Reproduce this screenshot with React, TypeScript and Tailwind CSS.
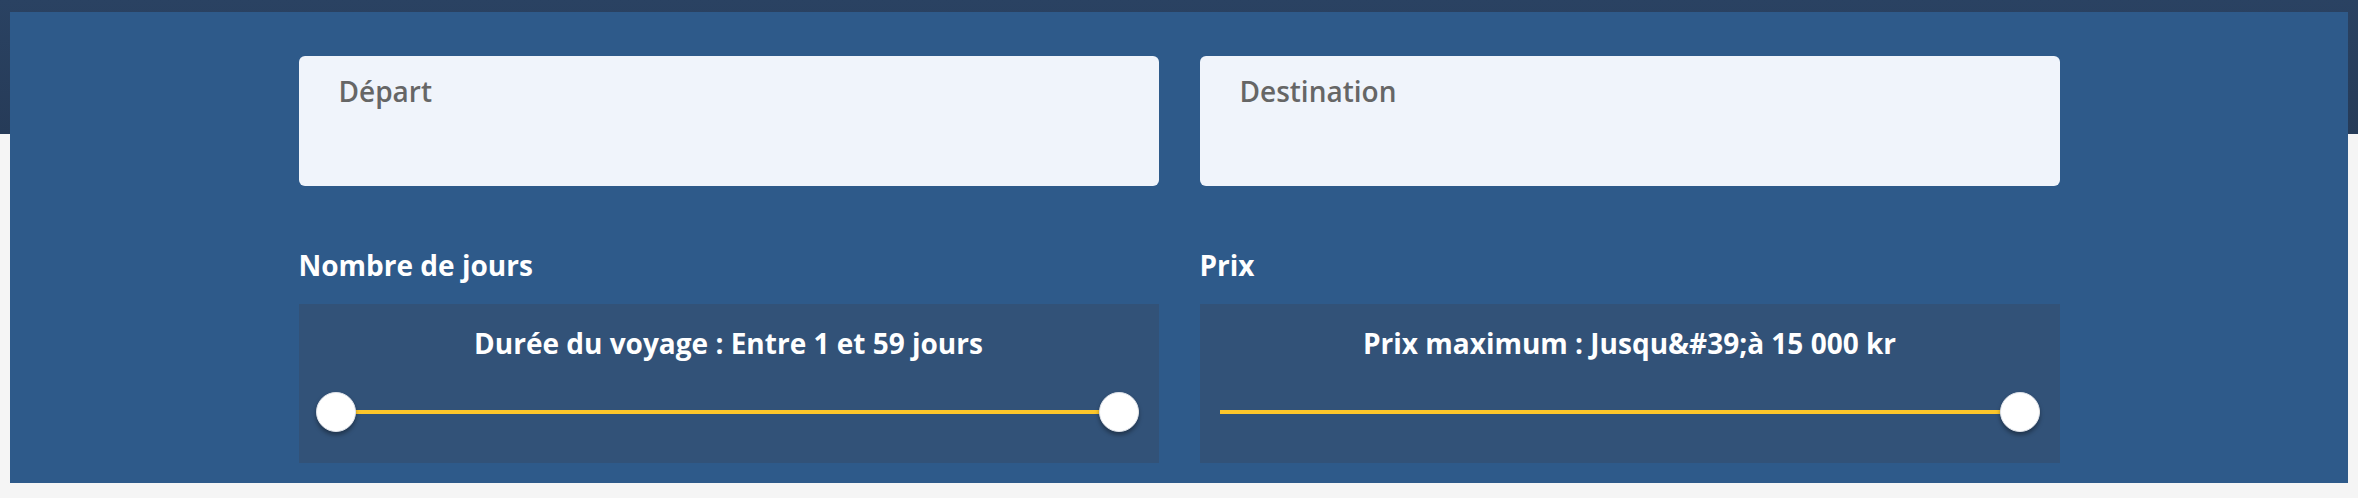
const font = "font-['Open_Sans',_'Noto_Sans',_sans-serif]";

function Thumb({ className = "" }: { className?: string }) {
  return (
    <span
      className={
        "relative z-10 block h-10 w-10 rounded-full border border-[#dfe3ea] bg-white shadow-[0_3px_4px_rgba(0,0,0,0.35)] " +
        className
      }
    />
  );
}

function SliderBox({ title, range }: { title: string; range: boolean }) {
  return (
    <div className="h-[159px] bg-[#325278] pt-[25px]">
      <p className="text-center text-[28px] font-bold leading-none text-white">{title}</p>
      <div
        className={
          "relative mx-5 mt-[35px] flex h-10 items-center " +
          (range ? "justify-between" : "justify-end")
        }
      >
        <div className="absolute left-0 right-0 top-[18px] h-1 bg-[#fcc62b]" />
        {range && <Thumb className="-ml-[3px]" />}
        <Thumb />
      </div>
    </div>
  );
}

function Field({ label }: { label: string }) {
  return (
    <div className="h-[130px] rounded-[6px] bg-[#f0f4fb] pl-[40px] pt-[21px]">
      <span className="text-[28px] font-semibold leading-none text-[#666666]">{label}</span>
    </div>
  );
}

export default function App() {
  return (
    <div
      className={
        "h-[498px] w-full overflow-hidden bg-[linear-gradient(to_bottom,#2a4262_0,#263b58_134px,#f5f5f5_134px)] px-[10px] pt-[12px] " +
        font
      }
    >
      <section className="h-[471px] bg-[#2e5a8a]">
        <div className="mx-auto w-[1761px] pt-[44px]">
          <div className="grid grid-cols-2 gap-x-[41px]">
            <Field label="Départ" />
            <Field label="Destination" />
          </div>

          <div className="mt-[65px] grid grid-cols-2 gap-x-[41px]">
            <div>
              <h3 className="text-[28px] font-bold leading-none text-white">Nombre de jours</h3>
              <div className="mt-[25px]">
                <SliderBox title="Durée du voyage : Entre 1 et 59 jours" range />
              </div>
            </div>
            <div>
              <h3 className="text-[28px] font-bold leading-none text-white">Prix</h3>
              <div className="mt-[25px]">
                <SliderBox title={"Prix maximum : Jusqu&#39;à 15 000 kr"} range={false} />
              </div>
            </div>
          </div>
        </div>
      </section>
    </div>
  );
}
